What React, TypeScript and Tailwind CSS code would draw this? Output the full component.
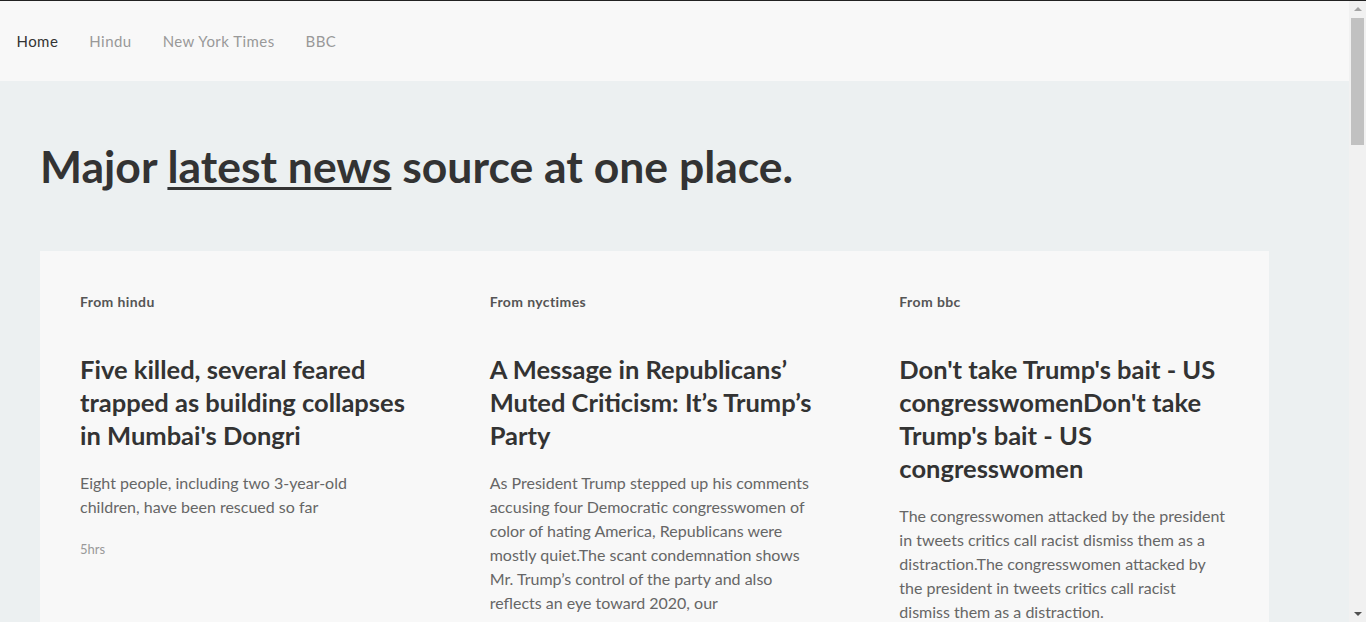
// News landing page: top nav, hero line, three source cards.

const SANS = "font-['Lato','Noto_Sans',sans-serif]";

interface Story {
  source: string;
  title: string;
  body: string;
  age?: string;
}

const STORIES: Story[] = [
  {
    source: "hindu",
    title: "Five killed, several feared trapped as building collapses in Mumbai's Dongri",
    body: "Eight people, including two 3-year-old children, have been rescued so far",
    age: "5hrs",
  },
  {
    source: "nyctimes",
    title: "A Message in Republicans’ Muted Criticism: It’s Trump’s Party",
    body: "As President Trump stepped up his comments accusing four Democratic congresswomen of color of hating America, Republicans were mostly quiet.The scant condemnation shows Mr. Trump’s control of the party and also reflects an eye toward 2020, our correspondent writes in an analysis.",
  },
  {
    source: "bbc",
    title: "Don't take Trump's bait - US congresswomenDon't take Trump's bait - US congresswomen",
    body: "The congresswomen attacked by the president in tweets critics call racist dismiss them as a distraction.The congresswomen attacked by the president in tweets critics call racist dismiss them as a distraction.",
  },
];

const NAV = ["Home", "Hindu", "New York Times", "BBC"];

function StoryColumn({ story }: { story: Story }) {
  return (
    <article className="px-10 pt-[42px] pb-10">
      <p className="text-[14px] font-bold leading-[18px] tracking-[0.4px] text-[#555]">From {story.source}</p>
      <h2 className="mt-[42px] text-[25.5px] font-bold leading-[33px] text-[#333]">{story.title}</h2>
      <p className="mt-[19px] text-[16px] leading-[24px] text-[#666]">{story.body}</p>
      {story.age ? <p className="mt-[21px] text-[13px] leading-[18px] text-[#999]">{story.age}</p> : null}
    </article>
  );
}

export default function App() {
  return (
    <div className={`h-[622px] overflow-hidden border-t border-[#222] bg-[#ecf0f1] ${SANS}`}>
      <div className="mr-[17px]">
        <nav className="flex h-[80px] items-center bg-[#f8f8f8] pl-px">
          {NAV.map((item, i) => (
            <a
              key={item}
              href="#"
              className={`px-[15.5px] text-[15px] tracking-[0.45px] ${i === 0 ? "text-[#333]" : "text-[#999]"}`}
            >
              {item}
            </a>
          ))}
        </nav>

        <main className="px-10 pt-[59px]">
          <h1 className="text-[44.5px] font-bold leading-[52px] text-[#333]">
            Major{" "}
            <span className="underline decoration-[3px] underline-offset-[4px]">latest news</span>{" "}
            source at one place.
          </h1>

          <section className="mt-[59px] mr-[40px] grid grid-cols-3 bg-[#f8f8f8]">
            {STORIES.map((s) => (
              <StoryColumn key={s.source} story={s} />
            ))}
          </section>
        </main>
      </div>

      {/* Fake classic scrollbar on the right edge. */}
      <div className="fixed right-0 top-px bottom-0 flex w-[17px] flex-col items-center bg-[#f1f1f1]">
        <span className="mt-[6px] h-0 w-0 border-x-[4px] border-b-[4px] border-x-transparent border-b-[#a3a3a3]" />
        <span className="mt-[7px] h-[127px] w-[13px] bg-[#c1c1c1]" />
        <span className="mt-auto mb-[6px] h-0 w-0 border-x-[4px] border-t-[4px] border-x-transparent border-t-[#505050]" />
      </div>
    </div>
  );
}
